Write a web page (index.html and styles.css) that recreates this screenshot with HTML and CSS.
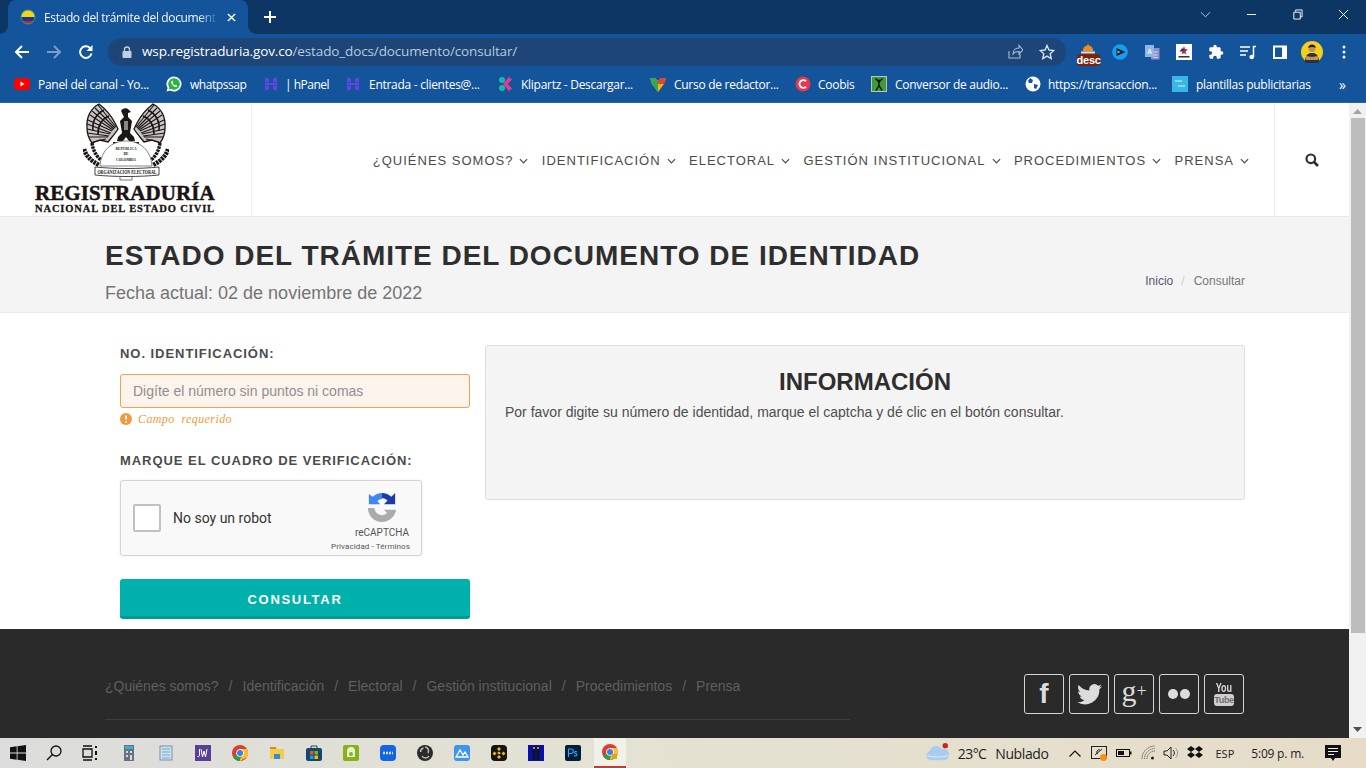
FILE: index.html
```html
<!DOCTYPE html>
<html lang="es">
<head>
<meta charset="utf-8">
<title>Estado del trámite del documento</title>
<link rel="stylesheet" href="styles.css">
</head>
<body>
<div class="chrome">
  <div class="tabstrip">
    <div class="tab">
      <svg class="fav" viewBox="0 0 16 16"><defs><clipPath id="c"><circle cx="8" cy="8" r="7"/></clipPath></defs><g clip-path="url(#c)"><rect width="16" height="8" fill="#f7d418"/><rect y="8" width="16" height="4" fill="#17398f"/><rect y="12" width="16" height="4" fill="#d3202c"/></g><circle cx="8" cy="8" r="7" fill="none" stroke="#3b9a8b"/></svg>
      <span class="tabtitle">Estado del trámite del document</span>
      <svg class="tabx" viewBox="0 0 10 10"><path d="M1 1l8 8M9 1l-8 8" stroke="#fff" stroke-width="1.6"/></svg>
    </div>
    <svg class="newtab" viewBox="0 0 12 12"><path d="M6 0v12M0 6h12" stroke="#fff" stroke-width="2"/></svg>
    <div class="winctl">
      <svg class="wc" viewBox="0 0 12 12"><path d="M1 3.500l5 5 5-5" fill="none" stroke="#c9d5e4"/></svg>
      <svg class="wc" viewBox="0 0 12 12"><path d="M1 6h10" stroke="#fff"/></svg>
      <svg class="wc" viewBox="0 0 12 12"><path d="M2 3.500h7v7.500h-7zM4 3V1h7v7.500H9" fill="none" stroke="#fff"/></svg>
      <svg class="wc" viewBox="0 0 12 12"><path d="M1 1l10 10M11 1L1 11" stroke="#fff"/></svg>
    </div>
  </div>
  <div class="toolbar">
    <svg class="nav" viewBox="0 0 16 16"><path d="M15 8H2M8 2L2 8l6 6" fill="none" stroke="#fff" stroke-width="2"/></svg>
    <svg class="nav" viewBox="0 0 16 16"><path d="M1 8h13M8 2l6 6-6 6" fill="none" stroke="#7d9cc4" stroke-width="2"/></svg>
    <svg class="nav" viewBox="0 0 16 16"><path d="M13.500 9.500A5.800 5.800 0 1 1 12 4" fill="none" stroke="#fff" stroke-width="2"/><path d="M14.500 1v6h-6z" fill="#fff"/></svg>
    <div class="omni">
      <svg class="lock" viewBox="0 0 10 12"><path d="M2.500 5V3.500a2.500 2.500 0 0 1 5 0V5" fill="none" stroke="#c2cfe0" stroke-width="1.300"/><rect y="5" width="9" height="7" rx="1" x="0.500" fill="#c2cfe0"/></svg>
      <span class="url"><b>wsp.registraduria.gov.co</b>/estado_docs/documento/consultar/</span>
      <svg class="omni-ic" viewBox="0 0 16 16"><path d="M2 7v7h11v-4M6 10c0-4 3-6 6-6V1.500L16 6l-4 4V7.500c-3 0-5 1-6 2.500z" fill="none" stroke="#a9bdd6" stroke-width="1.100"/></svg>
      <svg class="omni-ic star" viewBox="0 0 16 16"><path d="M8 1.500l2 4.500 4.800.5-3.600 3.200 1 4.800L8 12.100 3.800 14.500l1-4.800L1.200 6.500 6 6z" fill="none" stroke="#d5dfeb" stroke-width="1.400"/></svg>
    </div>
    <div class="exts">
      <div class="ext-desc"><svg class="bell" viewBox="0 0 14 10"><path d="M7 0l1 2c3 .5 4 3 4.500 6h-11C2 5 3 2.500 6 2z" fill="#f08a1d"/><rect y="8" width="14" height="2" fill="#d9d9d9"/></svg><span class="desc">desc</span></div>
      <svg class="ext e1" viewBox="0 0 16 16"><circle cx="8" cy="8" r="7.800" fill="#1a9bf0"/><path d="M4.500 4l9 4-9 4z" fill="#14232f"/><path d="M5.500 6.500l3 1.500-3 1.500z" fill="#9fb2bf"/></svg>
      <svg class="ext" viewBox="0 0 16 16"><rect x="7" y="4" width="8.500" height="11.500" fill="#8f8fc9"/><path d="M9.500 8h4M9.500 11h4M9.500 13.500h4" stroke="#d9d9ef"/><rect x="1" y="1" width="9" height="12" fill="#8fb4ea"/><text class="tr" x="5.500" y="10">A</text></svg>
      <svg class="ext" viewBox="0 0 16 16"><rect width="16" height="16" fill="#fff"/><path d="M8 2l1 3 3 .5-2.500 2 1 3L8 9l-2.500 1.500 1-3-3.500-1 3.500-.5z" fill="#a52b4b"/><path d="M6 4L4 8l4-2z" fill="#1e2a5a"/><rect x="2.500" y="12" width="11" height="1.500" fill="#333"/></svg>
      <svg class="ext" viewBox="0 0 24 24"><path d="M20.500 11H19V7c0-1.100-.9-2-2-2h-4V3.500a2.500 2.500 0 0 0-5 0V5H4c-1.100 0-2 .9-2 2v3.800h1.500c1.500 0 2.700 1.200 2.700 2.700S5 16.200 3.500 16.200H2V20c0 1.100.9 2 2 2h3.800v-1.500c0-1.500 1.200-2.700 2.700-2.700s2.700 1.200 2.700 2.700V22H17c1.100 0 2-.9 2-2v-4h1.500a2.500 2.500 0 0 0 0-5z" fill="#fff"/></svg>
      <svg class="ext" viewBox="0 0 16 16"><path d="M0 3h10M0 7h8M0 11h6" stroke="#fff" stroke-width="1.500"/><path d="M13.500 2v11M13.500 2.500h2.500" stroke="#fff" stroke-width="1.500"/><circle cx="11.700" cy="13" r="2.300" fill="#fff"/></svg>
      <svg class="ext" viewBox="0 0 16 16"><rect x="2" y="2.500" width="12" height="11.500" fill="none" stroke="#fff" stroke-width="2"/><rect x="10" y="2" width="4" height="12" fill="#fff"/></svg>
      <svg class="avatar" viewBox="0 0 22 22"><circle cx="11" cy="11" r="11" fill="#f3d11b"/><path d="M4 22c0-8 3-10 7-10s7 2 7 10z" fill="#26323c"/><path d="M5 18l12-2M17 18L5 16" stroke="#c98f5e" stroke-width="2"/><circle cx="11" cy="7.500" r="3.500" fill="#c98f5e"/><path d="M7.300 7c-.4-4 7-5 7.400 0-2-1.500-5-1.500-7.400 0z" fill="#1b1b1b"/></svg>
      <svg class="dots" viewBox="0 0 4 14"><circle cx="2" cy="2" r="1.500" fill="#fff"/><circle cx="2" cy="7" r="1.500" fill="#fff"/><circle cx="2" cy="12" r="1.500" fill="#fff"/></svg>
    </div>
  </div>
  <div class="bookmarks">
    <a class="bm bm1"><svg viewBox="0 0 16 16"><rect y="2" width="16" height="12" rx="3" fill="#f00"/><path d="M6.500 5.500l4 2.500-4 2.500z" fill="#fff"/></svg>Panel del canal - Yo...</a>
    <a class="bm bm2"><svg viewBox="0 0 16 16"><path d="M8 .500a7.500 7.500 0 0 0-6.400 11.400L.5 15.500l3.700-1A7.500 7.500 0 1 0 8 .500z" fill="#fff"/><path d="M8 2.200a5.800 5.800 0 0 0-4.800 9l-.6 2.200 2.200-.6A5.800 5.800 0 1 0 8 2.200z" fill="#2ab540"/><path d="M5.800 4.800c-1 .8-.8 2.500.6 4.100 1.500 1.700 3 2.400 4.100 1.800l.8-1-1.600-1-.8.7c-1-.4-1.800-1.300-2.200-2.200l.6-.8-.8-1.700z" fill="#fff"/></svg>whatpssap</a>
    <a class="bm bm3"><svg viewBox="0 0 16 16"><path d="M2 1l4 2v3.500H2zM10 3l4-2v5.500h-4zM2 7h12v2H2zM2 9.500h4V13l-4 2zM10 9.500h4V15l-4-2z" fill="#5f44e0"/></svg>| hPanel</a>
    <a class="bm bm4"><svg viewBox="0 0 16 16"><path d="M2 1l4 2v3.500H2zM10 3l4-2v5.500h-4zM2 7h12v2H2zM2 9.500h4V13l-4 2zM10 9.500h4V15l-4-2z" fill="#5f44e0"/></svg>Entrada - clientes@...</a>
    <a class="bm bm5"><svg viewBox="0 0 16 16"><circle cx="4" cy="4" r="3" fill="#18b7b0"/><circle cx="4" cy="12" r="3" fill="#18b7b0"/><path d="M5 8l6-7 3 2.500L9.500 8l4.500 4.500-3 2.500z" fill="#e93a8f"/></svg>Klipartz - Descargar...</a>
    <a class="bm bm6"><svg viewBox="0 0 16 16"><path d="M0 2l5 0 3 3 3-3 5 0-2 6-6 8-6-8z" fill="#f5b30c"/><path d="M0 2h5l3 3v11L2 8z" fill="#36a853"/><path d="M16 2h-5L8 5v3l6 0z" fill="#e4432f"/></svg>Curso de redactor...</a>
    <a class="bm bm7"><svg viewBox="0 0 16 16"><circle cx="8" cy="8" r="7.500" fill="#ee3350"/><path d="M11 5.300A3.800 3.800 0 1 0 11 10.700" fill="none" stroke="#fff" stroke-width="2"/></svg>Coobis</a>
    <a class="bm bm8"><svg viewBox="0 0 16 16"><rect width="16" height="16" fill="#b9c4b8"/><rect x="1" y="1" width="14" height="14" fill="#3f9a3c"/><path d="M8 3.500v6M5 14.500l3-5 3 5M4.500 2.500L8 6l3.500-3.500" stroke="#0c0c0c" stroke-width="1.400" fill="none"/></svg>Conversor de audio...</a>
    <a class="bm bm9"><svg viewBox="0 0 16 16"><circle cx="8" cy="8" r="7.500" fill="#fff"/><path d="M5 2l3 2-1 3-3 0-1-2zM9 8l4 1-2 4-2-1z" fill="#14549b"/></svg>https://transaccion...</a>
    <a class="bm bm10"><svg viewBox="0 0 16 16"><rect width="16" height="16" fill="#39b8e6"/><path d="M3 5h7M6 10h7" stroke="#d7f1fb"/></svg>plantillas publicitarias</a>
    <span class="more">»</span>
  </div>
</div>

<div class="viewport">
  <div class="page">
    <header class="site-head">
      <div class="logo">
        <svg class="emblem" viewBox="0 0 86 78">
          <g id="half">
            <path d="M16 1C8 5 3 14 4 25c0 6 2 11 5 15l8-3 8 2c3-4 7-8 10-13l-3-6c-3-6-7-12-16-19z" fill="#c9c4c2" stroke="#1a1414" stroke-width="1.300"/>
            <path d="M33 24L15 2M32 25L12 5M31 26L9 8M30 27L7 12M29 28L5 17M28 30L4 21M27 31L4 26M26 33L4 30M25 34L6 34M23 36L10 39" stroke="#1a1414" stroke-width="1.100"/>
            <path d="M21 7C13 11 9 18 10 28M26 13C19 16 15 22 15 31" fill="none" stroke="#1a1414" stroke-width="1.600"/>
            <path d="M1 46c2 7 7 12 15 16" fill="none" stroke="#1a1414" stroke-width="4.500" stroke-dasharray="2.500 .8"/>
            <path d="M9 40c1 7 4 13 9 17" fill="none" stroke="#1a1414" stroke-width="3.500" stroke-dasharray="2.500 .8"/>
          </g>
          <use href="#half" transform="matrix(-1 0 0 1 86 0)"/>
          <path d="M38 8c1-3 6-4 8-1l2 2-3 1 0 4 4 4-2 12 4 4 1 4h-6l-3-4-3 4h-6l1-4 4-4-2-12 4-4z" fill="#1d1616"/>
          <path d="M41 18h4v9h-4z" fill="#8d8886"/>
          <path d="M30 40h26" stroke="#1a1414" stroke-width="2"/>
          <path d="M17 63c1-16 12-25 26-25s25 9 26 25z" fill="#fff" stroke="#666" stroke-width=".8"/>
          <text class="em1" x="43" y="47">REPÚBLICA</text>
          <text class="em1" x="43" y="52">DE</text>
          <text class="em1" x="43" y="58">COLOMBIA</text>
          <path d="M12 64c20 2 44 2 64 0v8c-20 2-44 2-64 0z" fill="#fff" stroke="#1a1414" stroke-width=".8"/>
          <text class="em2" x="58.670" y="71" transform="scale(.75 1)">ORGANIZACIÓN ELECTORAL</text>
          <path d="M37 74v3h12v-3" fill="none" stroke="#777"/>
        </svg>
        <div class="logo-a">REGISTRADURÍA</div>
        <div class="logo-b">NACIONAL DEL ESTADO CIVIL</div>
      </div>
      <nav class="menu">
        <a>¿QUIÉNES SOMOS?<svg viewBox="0 0 10 6"><path d="M1 1l4 4 4-4"/></svg></a>
        <a>IDENTIFICACIÓN<svg viewBox="0 0 10 6"><path d="M1 1l4 4 4-4"/></svg></a>
        <a>ELECTORAL<svg viewBox="0 0 10 6"><path d="M1 1l4 4 4-4"/></svg></a>
        <a>GESTIÓN INSTITUCIONAL<svg viewBox="0 0 10 6"><path d="M1 1l4 4 4-4"/></svg></a>
        <a>PROCEDIMIENTOS<svg viewBox="0 0 10 6"><path d="M1 1l4 4 4-4"/></svg></a>
        <a>PRENSA<svg viewBox="0 0 10 6"><path d="M1 1l4 4 4-4"/></svg></a>
      </nav>
      <div class="search"><svg viewBox="0 0 14 14"><circle cx="5.800" cy="5.800" r="4.300" fill="none" stroke="#2f2f2f" stroke-width="2.200"/><path d="M9 9l4 4" stroke="#2f2f2f" stroke-width="2.600"/></svg></div>
    </header>

    <section class="band">
      <div class="band-in">
        <div>
          <h1>ESTADO DEL TRÁMITE DEL DOCUMENTO DE IDENTIDAD</h1>
          <p class="date">Fecha actual: 02 de noviembre de 2022</p>
        </div>
        <div class="crumbs"><a>Inicio</a><i>/</i><span>Consultar</span></div>
      </div>
    </section>

    <main class="content">
      <form class="form">
        <label class="lab">NO. IDENTIFICACIÓN:</label>
        <div class="input">Digíte el número sin puntos ni comas</div>
        <div class="err"><svg viewBox="0 0 12 12"><circle cx="6" cy="6" r="6" fill="#ef9a3c"/><path d="M6 2.500v4M6 8v1.800" stroke="#fff" stroke-width="1.700"/></svg><em>Campo&nbsp; requerido</em></div>
        <label class="lab lab2">MARQUE EL CUADRO DE VERIFICACIÓN:</label>
        <div class="captcha">
          <div class="cb"></div>
          <span class="robot">No soy un robot</span>
          <div class="rc">
            <svg viewBox="0 0 32 32"><path d="M16 1a15 15 0 0 1 10 4l4-4v12H18l4-4a9 9 0 0 0-6-2.500z" fill="#1c3aa9"/><path d="M16 1v6.500a9 9 0 0 0-5 2l3 3.500H2V2l4 3a15 15 0 0 1 10-4z" fill="#4285f4"/><path d="M1 17h7a8 8 0 0 0 13.500 5.500L18 19h13c-1 7-7 13-15 13C7 32 1 25 1 17z" fill="#ababab"/></svg>
            <span class="rc1">reCAPTCHA</span>
            <span class="rc2">Privacidad - Términos</span>
          </div>
        </div>
        <button class="btn" type="button">CONSULTAR</button>
      </form>
      <aside class="info">
        <h2>INFORMACIÓN</h2>
        <p>Por favor digite su número de identidad, marque el captcha y dé clic en el botón consultar.</p>
      </aside>
    </main>

    <footer class="foot">
      <div class="foot-l">
        <div class="flinks"><a>¿Quiénes somos?</a><i>/</i><a>Identificación</a><i>/</i><a>Electoral</a><i>/</i><a>Gestión institucional</a><i>/</i><a>Procedimientos</a><i>/</i><a>Prensa</a></div>
        <div class="frule"></div>
      </div>
      <div class="social">
        <a class="soc f">f</a>
        <a class="soc"><svg viewBox="0 0 24 20" class="tw"><path d="M24 2.400c-.9.400-1.800.7-2.800.8 1-.6 1.800-1.600 2.200-2.700-1 .6-2 1-3.100 1.200a4.900 4.900 0 0 0-8.400 4.500C7.800 6 4.100 4 1.700.9c-1.300 2.200-.7 5.100 1.500 6.600-.8 0-1.600-.2-2.200-.6 0 2.400 1.700 4.400 3.900 4.900-.7.200-1.500.2-2.200.1.600 2 2.400 3.400 4.600 3.400A9.900 9.900 0 0 1 0 17.300 14 14 0 0 0 21.500 4.900c1-.7 1.800-1.500 2.500-2.500z" fill="#dcdcdc"/></svg></a>
        <a class="soc g">g<sup>+</sup></a>
        <a class="soc"><svg viewBox="0 0 22 10" class="fl"><circle cx="5" cy="5" r="5" fill="#dcdcdc"/><circle cx="17" cy="5" r="5" fill="#dcdcdc"/></svg></a>
        <a class="soc yt"><span class="y1">You</span><span class="y2">Tube</span></a>
      </div>
    </footer>
  </div>
  <div class="scrollbar">
    <svg class="sa" viewBox="0 0 9 5"><path d="M0 5l4.500-5L9 5z" fill="#a3a3a3"/></svg>
    <div class="thumb"></div>
    <svg class="sa" viewBox="0 0 9 5"><path d="M0 0l4.500 5L9 0z" fill="#505050"/></svg>
  </div>
</div>

<div class="taskbar">
  <svg class="tb" viewBox="0 0 16 16"><path d="M0 2.300L6.700 1.300V7.600H0zM7.500 1.200L16 0V7.600H7.500zM0 8.400H6.700V14.700L0 13.700zM7.500 8.400H16V16L7.500 14.800z" fill="#111"/></svg>
  <svg class="tb" viewBox="0 0 16 16"><circle cx="10" cy="6" r="5" fill="none" stroke="#111" stroke-width="1.300"/><path d="M6.500 9.500L1 15" stroke="#111" stroke-width="1.500"/></svg>
  <svg class="tb" viewBox="0 0 16 16"><path d="M1 4h9v8H1zM1 1h9M1 15h9" fill="none" stroke="#111" stroke-width="1.300"/><path d="M13 1h2v2h-2zM13 6h2v4h-2zM13 13h2v2h-2z" fill="#111"/></svg>
  <svg class="tb" viewBox="0 0 16 16"><rect x="3" width="10" height="16" fill="#67727e"/><rect x="4" y="1" width="8" height="3" fill="#3eaad6"/><path d="M5 6h2v2H5zM9 6h2v2H9zM5 10h2v2H5zM9 10h2v5H9z" fill="#d5dadf"/></svg>
  <svg class="tb" viewBox="0 0 16 16"><rect x="2" y="1" width="12" height="14" fill="#c7e2f2" stroke="#7a93a8"/><path d="M4 4h8M4 7h8M4 10h8M4 13h8" stroke="#89a5bb"/></svg>
  <svg class="tb" viewBox="0 0 16 16"><rect width="16" height="16" fill="#5a3f95"/><path d="M4.500 4v6c0 1.500-1 2-2 1.500M6 4l1.500 8L9 6l1.500 6L12 4" fill="none" stroke="#fff"/></svg>
  <svg class="tb" viewBox="0 0 16 16"><circle cx="8" cy="8" r="8" fill="#db3d31"/><path d="M8 4h7a8 8 0 0 1 0 8L8 16z" fill="#f6c12c"/><path d="M8 8L1 12a8 8 0 0 0 6 4l4-7z" fill="#2f9e44"/><circle cx="8" cy="8" r="3.800" fill="#fff"/><circle cx="8" cy="8" r="3" fill="#3a7de6"/></svg>
  <svg class="tb" viewBox="0 0 16 16"><path d="M1 2h6l1 2h7v10H1z" fill="#f7c948"/><path d="M5 14V9h6v5" fill="#2f8fd4"/><rect x="1" y="2" width="6" height="2" fill="#c9921f"/></svg>
  <svg class="tb" viewBox="0 0 16 16"><rect y="3" width="16" height="13" rx="2" fill="#16466e"/><path d="M5 3V1h6v2" fill="none" stroke="#16466e"/><rect x="4" y="6" width="3.500" height="3.500" fill="#f25022"/><rect x="8.500" y="6" width="3.500" height="3.500" fill="#7fba00"/><rect x="4" y="10.500" width="3.500" height="3.500" fill="#00a4ef"/><rect x="8.500" y="10.500" width="3.500" height="3.500" fill="#ffb900"/></svg>
  <svg class="tb" viewBox="0 0 16 16"><rect width="16" height="16" rx="2" fill="#87b11c"/><path d="M4 6a4 4 0 0 1 8 0v6H4z" fill="#e7f2cc"/><circle cx="8" cy="9" r="2" fill="#87b11c"/></svg>
  <svg class="tb" viewBox="0 0 16 16"><rect width="16" height="16" rx="4" fill="#1565e0"/><path d="M3 8h10" stroke="#cfe1ff" stroke-width="2.500" stroke-dasharray="2 1"/></svg>
  <svg class="tb" viewBox="0 0 16 16"><circle cx="8" cy="8" r="8" fill="#2b2b2b"/><path d="M8 2a4 4 0 0 1 3 6M12 11a4 4 0 0 1-7 0M3.500 7a4 4 0 0 1 3-4" fill="none" stroke="#bcbcbc" stroke-width="1.500"/></svg>
  <svg class="tb" viewBox="0 0 16 16"><rect width="16" height="16" rx="3" fill="#3e95ea"/><path d="M2 12l4-7 3 5 2-3 3 5z" fill="none" stroke="#fff" stroke-width="1.300"/></svg>
  <svg class="tb" viewBox="0 0 16 16"><rect width="16" height="16" rx="4" fill="#141414"/><path d="M8 2l2 2-2 2-2-2zM3.500 6.500l2 2-2 2-2-2zM12.500 6.500l2 2-2 2-2-2zM8 10l2 2-2 2-2-2zM8 6.500l2 1.500-2 1.500L6 8z" fill="#f0b90b"/></svg>
  <svg class="tb" viewBox="0 0 16 16"><rect width="16" height="16" fill="#0a0fa8"/><path d="M6 1v14M10 1v14" stroke="#111" stroke-width="2.500"/><path d="M5 3h2M9 3h2" stroke="#e8c12a" stroke-width="1.500"/></svg>
  <svg class="tb" viewBox="0 0 16 16"><rect width="16" height="16" rx="2" fill="#001e36"/><path d="M3.500 12V4h2.500a2 2 0 0 1 0 4.500H3.500M12 7c-1-.8-2.500-.5-2.500.5s2.500 1 2.500 2.300-2 1.500-3 .7" fill="none" stroke="#31a8ff" stroke-width="1.100"/></svg>
  <div class="tb-active"><svg class="tb" viewBox="0 0 16 16"><circle cx="8" cy="8" r="8" fill="#db3d31"/><path d="M8 4h7a8 8 0 0 1 0 8L8 16z" fill="#f6c12c"/><path d="M8 8L1 12a8 8 0 0 0 6 4l4-7z" fill="#2f9e44"/><circle cx="8" cy="8" r="3.800" fill="#fff"/><circle cx="8" cy="8" r="3" fill="#3a7de6"/><rect x="10" y="10" width="5" height="5" fill="#d7a71a"/></svg></div>
  <div class="tray">
    <svg class="cloud" viewBox="0 0 26 22"><path d="M5 20a5 5 0 0 1-1-9.800A7 7 0 0 1 17 8a5.500 5.500 0 0 1 4 12z" fill="#a9cdee"/><path d="M1 15c6 2 16 2 24 0" stroke="#e5f1fb" fill="none"/><circle cx="21" cy="4" r="3" fill="#c8281e"/></svg>
    <span class="temp">23°C</span><span class="sky">Nublado</span>
    <svg class="up" viewBox="0 0 12 7"><path d="M.5 6.500L6 1l5.500 5.500" fill="none" stroke="#111" stroke-width="1.200"/></svg>
    <svg class="ti t1" viewBox="0 0 16 16"><rect x=".5" y="1.500" width="15" height="12" fill="none" stroke="#222"/><path d="M4 10l7-6M7 9a2 2 0 0 1 2-4" stroke="#222" fill="none"/><circle cx="12.500" cy="12.500" r="3.500" fill="#f39313"/></svg>
    <svg class="ti t2" viewBox="0 0 16 16"><rect x=".5" y="4.500" width="13" height="7" fill="none" stroke="#111"/><rect x="2" y="6" width="6" height="4" fill="#111"/><rect x="14" y="6.500" width="1.500" height="3" fill="#111"/></svg>
    <svg class="ti t3" viewBox="0 0 16 16"><path d="M1 14a13 13 0 0 1 13-13M3.500 14A10.500 10.500 0 0 1 14 3.500M6 14a8 8 0 0 1 8-8" fill="none" stroke="#666" stroke-dasharray="1.500 .7"/><circle cx="11.500" cy="13" r="1.500" fill="#222"/></svg>
    <svg class="ti t4" viewBox="0 0 16 16"><path d="M1 6h3l4-4v12l-4-4H1z" fill="none" stroke="#222"/><path d="M10 5a4 4 0 0 1 0 6" fill="none" stroke="#222"/><path d="M12.500 3a7 7 0 0 1 0 10" fill="none" stroke="#999"/></svg>
    <svg class="ti t5" viewBox="0 0 16 16"><path d="M4 1L0 4l4 3-4 3 4 3 4-3 4 3 4-3-4-3 4-3-4-3-4 3zM4 7l4-3 4 3-4 3z" fill="#111"/></svg>
    <span class="lang">ESP</span>
    <span class="clock">5:09 p. m.</span>
    <svg class="noti" viewBox="0 0 16 16"><path d="M0 0h16v13H10l-2 3-2-3H0z" fill="#111"/><path d="M3 3.500h10M3 6.500h10M3 9.500h6" stroke="#eee"/></svg>
  </div>
</div>
</body>
</html>
```
FILE: styles.css
```css
* { box-sizing: border-box; }
html, body { margin: 0; padding: 0; height: 100%; overflow: hidden; }
body { width: 1366px; height: 768px; display: flex; flex-direction: column; font-family: "Liberation Sans", Arial, sans-serif; background: #fff; }
svg { display: block; flex: none; }

/* browser chrome */
.chrome { height: 103px; background: #14549b; flex: none; border-bottom: 1px solid #2a63a3; }
.tabstrip { height: 34px; background: #0e3664; display: flex; align-items: flex-end; padding-left: 8px; }
.tab { width: 240px; height: 34px; background: #14549b; border-radius: 8px 8px 0 0; display: flex; align-items: center; padding: 0 0 0 12px; position: relative; }
.tab::before, .tab::after { content: ""; position: absolute; bottom: 0; width: 8px; height: 8px; }
.tab::before { left: -8px; background: radial-gradient(circle at 0 0, #0e3664 7.500px, #14549b 8px); }
.tab::after { right: -8px; background: radial-gradient(circle at 100% 0, #0e3664 7.500px, #14549b 8px); }
.fav { width: 16px; height: 16px; }
.tabtitle { width: 176px; margin-left: 8px; white-space: nowrap; font: 12px "Open Sans", sans-serif; color: #f2f6fb; letter-spacing: -.36px; -webkit-mask-image: linear-gradient(90deg, #000 88%, transparent 99%); mask-image: linear-gradient(90deg, #000 88%, transparent 99%); }
.tabx { width: 9px; height: 9px; margin-left: 7px; }
.newtab { width: 12px; height: 12px; margin: 0 0 11px 16px; }
.winctl { margin-left: auto; display: flex; height: 28px; align-self: flex-start; align-items: center; padding-right: 17px; gap: 35px; }
.wc { width: 11px; height: 11px; }
.toolbar { height: 34px; display: flex; align-items: center; padding: 2px 0 0 14px; }
.nav { width: 16px; height: 16px; margin-right: 16px; }
.omni { width: 958px; height: 28px; margin-left: -2px; background: #1d4577; border-radius: 14px; display: flex; align-items: center; padding-left: 14px; }
.lock { width: 10px; height: 12px; }
.url { font: 13.500px/1 "Open Sans", sans-serif; color: #b9cade; margin-left: 10px; letter-spacing: -.13px; white-space: nowrap; }
.url b { font-weight: 400; color: #fff; }
.omni-ic { width: 16px; height: 16px; margin-left: auto; }
.omni-ic.star { margin-left: 16px; margin-right: 11px; }
.exts { display: flex; align-items: center; margin-left: 11px; height: 34px; }
.ext-desc { width: 22px; display: flex; flex-direction: column; align-items: center; margin-top: 5px; }
.bell { width: 14px; height: 11px; }
.desc { display: block; width: 23px; height: 12px; background: #7b2410; border-radius: 2px; font: 700 11px/12px "Liberation Sans", sans-serif; color: #fff; text-align: center; letter-spacing: -.2px; flex: none; }
.ext { width: 16px; height: 16px; margin-left: 16px; }
.ext.e1 { margin-left: 13px; }
.tr { font: 700 7px "Liberation Sans", sans-serif; fill: #e9f0fb; text-anchor: middle; }
.avatar { width: 22px; height: 22px; margin-left: 13px; }
.dots { width: 4px; height: 14px; margin-left: 19px; }

.bookmarks { height: 32px; display: flex; align-items: center; padding-left: 14px; }
.bm { display: flex; align-items: center; font: 12px "Open Sans", sans-serif; color: #fff; white-space: nowrap; letter-spacing: -.28px; gap: 8px; flex: none; }
.bm svg { width: 16px; height: 16px; }
.bm1 { width: 152px; }
.bm2 { width: 97px; letter-spacing: -.45px; }
.bm3 { width: 82px; gap: 6px; letter-spacing: -.5px; }
.bm4 { width: 153px; }
.bm5 { width: 152px; gap: 7px; }
.bm6 { width: 145px; }
.bm7 { width: 76px; gap: 7px; }
.bm8 { width: 154px; }
.bm9 { width: 147px; gap: 7px; }
.bm10 { width: 167px; }
.more { font: 14px "Open Sans", sans-serif; color: #fff; }

/* page viewport */
.viewport { flex: 1; display: flex; min-height: 0; }
.page { width: 1349px; display: flex; flex-direction: column; overflow: hidden; }
.scrollbar { width: 17px; background: #f1f1f1; display: flex; flex-direction: column; align-items: center; justify-content: space-between; padding: 6px 0; }
.sa { width: 9px; height: 5px; }
.thumb { width: 14px; flex: none; height: 515px; background: #bdbdbd; margin: 4px 0 auto; }

.site-head { height: 114px; flex: none; display: flex; border-bottom: 1px solid #eaeaea; }
.logo { width: 252px; flex: none; border-right: 1px solid #eee; padding: 0 0 0 35px; }
.emblem { width: 86px; height: 78px; margin-left: 48px; }
.em1 { font: 700 3.600px "Liberation Serif", serif; text-anchor: middle; fill: #222; }
.em2 { font: 700 5.400px "Liberation Serif", serif; text-anchor: middle; fill: #111; }
.logo-a { font: 700 21px/20px "Liberation Serif", serif; color: #1c1212; margin-top: 2px; letter-spacing: .1px; -webkit-text-stroke: .5px #1c1212; white-space: nowrap; }
.logo-b { font: 700 10.500px/10px "Liberation Serif", serif; color: #1c1212; margin-top: 1px; letter-spacing: .87px; -webkit-text-stroke: .3px #1c1212; white-space: nowrap; }
.menu { flex: 1; display: flex; align-items: center; justify-content: flex-end; gap: 13.400px; padding: 2px 25px 0 0; }
.menu a { display: flex; align-items: center; font: 13px "Liberation Sans", sans-serif; color: #4a4a4a; letter-spacing: 1px; white-space: nowrap; }
.menu svg { width: 9px; height: 6px; margin-left: 6px; margin-top: 1px; fill: none; stroke: #4a4a4a; stroke-width: 1.300; }
.search { width: 75px; flex: none; border-left: 1px solid #eee; display: flex; align-items: center; justify-content: center; }
.search svg { width: 14px; height: 14px; }

.band { height: 96px; flex: none; background: #f4f4f4; border-bottom: 1px solid #ececec; padding: 0 104px 0 105px; }
.band-in { display: flex; justify-content: space-between; height: 100%; }
h1 { margin: 23px 0 0; font: 700 28px/32px "Liberation Sans", sans-serif; color: #2e2e2e; letter-spacing: .98px; white-space: nowrap; }
.date { margin: 11px 0 0; font: 18px/20px "Liberation Sans", sans-serif; color: #747474; }
.crumbs { margin-top: 56px; font: 12px/16px "Liberation Sans", sans-serif; color: #777; display: flex; height: 16px; }
.crumbs a { color: #5a5570; }
.crumbs i { font-style: normal; color: #ccc; margin: 0 9px 0 8px; }

.content { height: 316px; flex: none; display: flex; padding: 32px 104px 0 120px; gap: 15px; }
.form { width: 350px; flex: none; display: flex; flex-direction: column; align-items: flex-start; }
.lab { font: 700 13px/16px "Liberation Sans", sans-serif; color: #4b4b4b; letter-spacing: .95px; white-space: nowrap; margin-top: 1px; }
.lab2 { margin-top: 27px; }
.input { width: 350px; height: 34px; margin-top: 12px; background: #fdf3ed; border: 1px solid #efa24f; border-radius: 3px; padding: 0 12px; font: 14px/32px "Liberation Sans", sans-serif; color: #8f8f8f; }
.err { display: flex; align-items: center; margin-top: 4px; height: 14px; }
.err svg { width: 12px; height: 12px; }
.err em { font: italic 12px/14px "Liberation Serif", serif; color: #ef9a3c; margin-left: 6px; letter-spacing: .4px; }
.captcha { width: 302px; height: 76px; margin-top: 11px; background: #f9f9f9; border: 1px solid #d3d3d3; border-radius: 3px; box-shadow: 0 0 3px rgba(0,0,0,.08); display: flex; align-items: center; padding: 0 11px 0 12px; }
.cb { width: 28px; height: 28px; background: #fff; border: 2px solid #c1c1c1; border-radius: 2px; flex: none; }
.robot { font: 14px Roboto, sans-serif; color: #333; margin-left: 12px; }
.rc { margin-left: auto; width: 80px; display: flex; flex-direction: column; align-items: flex-end; font-family: Roboto, sans-serif; margin-top: 3px; }
.rc svg { width: 30px; height: 30px; margin: 4px 13px 0 0; }
.rc1 { font-size: 10px; line-height: 12px; color: #555; margin: 5px 1px 0 0; }
.rc2 { font-size: 8px; line-height: 10px; color: #555; margin-top: 3px; white-space: nowrap; letter-spacing: .1px; }
.btn { width: 350px; height: 40px; margin-top: 23px; border: 0; border-bottom: 3px solid #029a92; border-radius: 3px; background: #00b1ab; color: #fff; font: 700 13px/32px "Liberation Sans", sans-serif; letter-spacing: 1.700px; padding: 5px 0 0; }

.info { width: 760px; height: 155px; background: #f4f4f4; border: 1px solid #dedede; border-radius: 3px; padding: 0 19px; }
.info h2 { margin: 22px 0 0; text-align: center; font: 700 24px/28px "Liberation Sans", sans-serif; color: #2e2e2e; }
.info p { margin: 6px 0 0; font: 14px/20px "Liberation Sans", sans-serif; color: #4e4e4e; white-space: nowrap; }

.foot { flex: 1; background: #2a2a2a; display: flex; padding: 45px 105px 0; justify-content: space-between; }
.foot-l { width: 745px; }
.flinks { display: flex; font: 14px/24px "Liberation Sans", sans-serif; color: #5f5f5f; }
.flinks a { white-space: nowrap; }
.flinks i { font-style: normal; margin: 0 10px; }
.frule { height: 1px; background: #3e3e3e; margin-top: 21px; }
.social { display: flex; gap: 5px; align-self: flex-start; }
.soc { width: 40px; height: 40px; border: 1px solid #d5d5d5; border-radius: 3px; display: flex; align-items: center; justify-content: center; color: #dcdcdc; }
.f { font: 700 28px/40px "Liberation Sans", sans-serif; }
.tw { width: 25px; height: 21px; }
.g { font: 30px/36px "Liberation Serif", serif; padding-bottom: 6px; }
.g sup { font-size: 18px; line-height: 1; vertical-align: 10px; }
.fl { width: 22px; height: 10px; }
.yt { flex-direction: column; }
.y1 { font: 700 12px/12px "Liberation Sans", sans-serif; transform: scaleX(.75); }
.y2 { font: 700 9px/12px "Liberation Sans", sans-serif; background: #cfcfcf; color: #6f6f6f; border-radius: 3px; width: 20px; text-align: center; letter-spacing: -.3px; }

/* taskbar */
.taskbar { height: 30px; flex: none; display: flex; align-items: center; background: linear-gradient(90deg, #dcdcdc 0%, #e4e2d2 45%, #e6dcc8 100%); padding-left: 10px; }
.tb { width: 16px; height: 16px; margin-right: 21px; }
.taskbar > .tb:nth-child(1), .taskbar > .tb:nth-child(2) { margin-right: 20px; }
.taskbar > .tb:nth-child(3) { margin-right: 23px; }
.tb-active { width: 32px; height: 30px; margin-left: -8px; background: rgba(255,255,255,.5); border-bottom: 2px solid #c53a36; display: flex; align-items: center; justify-content: center; }
.tb-active .tb { margin: 0; }
.tray { margin-left: auto; display: flex; align-items: center; height: 30px; padding-right: 25px; font: 14px "Open Sans", sans-serif; color: #1e1e1e; }
.cloud { width: 24px; height: 20px; margin-top: -3px; }
.temp { margin-left: 8px; letter-spacing: -.6px; }
.sky { margin-left: 9px; letter-spacing: -.4px; }
.up { width: 12px; height: 7px; margin-left: 20px; }
.ti { width: 16px; height: 16px; }
.t1 { margin-left: 10px; }
.t2 { margin-left: 9px; }
.t3 { margin-left: 9px; }
.t4 { margin-left: 6px; }
.t5 { margin-left: 8px; }
.lang { font-size: 11px; margin-left: 13px; }
.clock { font-size: 12px; margin-left: 17px; letter-spacing: -.2px; }
.noti { width: 16px; height: 16px; margin-left: 21px; }
```
